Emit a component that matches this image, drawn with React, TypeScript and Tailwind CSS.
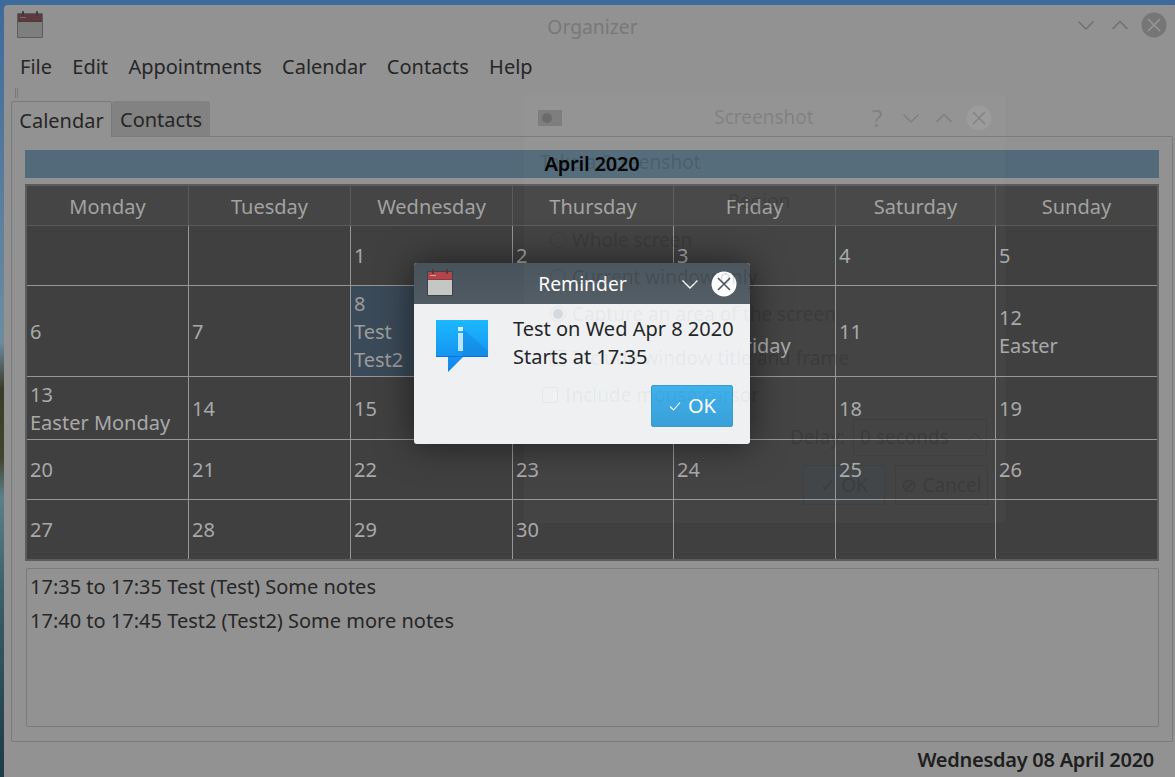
import type { ReactNode } from "react";

const days = ["Monday", "Tuesday", "Wednesday", "Thursday", "Friday", "Saturday", "Sunday"];

const weeks: string[][][] = [
  [[], [], ["1"], ["2"], ["3"], ["4"], ["5"]],
  [["6"], ["7"], ["8", "Test", "Test2"], ["9"], ["10", "Good Friday"], ["11"], ["12", "Easter"]],
  [["13", "Easter Monday"], ["14"], ["15"], ["16"], ["17"], ["18"], ["19"]],
  [["20"], ["21"], ["22"], ["23"], ["24"], ["25"], ["26"]],
  [["27"], ["28"], ["29"], ["30"], [], [], []],
];

function CalendarIcon({ dim }: { dim?: boolean }) {
  return (
    <svg width="28" height="28" viewBox="0 0 28 28" className="shrink-0">
      <rect x="1" y="2" width="26" height="25" rx="1" fill={dim ? "#5c5c5c" : "#3c4249"} />
      <rect x="2" y="3" width="24" height="23" fill={dim ? "#7d7f7d" : "#c4c7c4"} />
      <rect x="2" y="3" width="24" height="7" fill={dim ? "#5d3a40" : "#b3444a"} />
      <rect x="2" y="10" width="24" height="1" fill={dim ? "#4a3a3c" : "#8c3b40"} />
      <rect x="6" y="0" width="2" height="5" rx="1" fill={dim ? "#3f3a3c" : "#5c3236"} />
      <rect x="20" y="0" width="2" height="5" rx="1" fill={dim ? "#3f3a3c" : "#5c3236"} />
      <rect x="4" y="6" width="6" height="1" fill={dim ? "#7a6a6c" : "#d9a0a0"} />
    </svg>
  );
}

function Chevron({ up, color, width = 1.4 }: { up?: boolean; color: string; width?: number }) {
  return (
    <svg width="18" height="12" viewBox="0 0 18 12" fill="none" stroke={color} strokeWidth={width} className="shrink-0">
      <path d={up ? "M1.5 10 9 2.5 16.5 10" : "M1.5 2.5 9 10 16.5 2.5"} />
    </svg>
  );
}

function CloseCircle({ bg, color }: { bg: string; color: string }) {
  return (
    <svg width="26" height="26" viewBox="0 0 26 26" fill="none" className="shrink-0">
      <circle cx="13" cy="13" r="12.5" fill={bg} />
      <path d="M7 7 19 19M19 7 7 19" stroke={color} strokeWidth="1.6" />
    </svg>
  );
}

function Cell({ lines, active, last, bottom, nudge }: { lines: string[]; active?: boolean; last?: boolean; bottom?: boolean; nudge?: boolean }) {
  return (
    <div
      className={`flex flex-col justify-center pl-[3px] leading-[28px] border-[#969696] ${last ? "" : "border-r"} ${bottom ? "" : "border-b"} ${nudge ? "pt-[2px]" : ""} ${active ? "bg-[#3b4a58] text-[#9c9c9c]" : "text-[#a9a9a9]"}`}
    >
      {lines.map((line) => (
        <span key={line} className="whitespace-nowrap">
          {line}
        </span>
      ))}
    </div>
  );
}

function Radio({ on, tone }: { on?: boolean; tone: string }) {
  return (
    <span className={`flex h-[16px] w-[16px] shrink-0 items-center justify-center rounded-full border ${tone}`}>
      {on && <span className="h-[10px] w-[10px] rounded-full bg-[#5d8aa0]/20" />}
    </span>
  );
}

function GhostRow({ children, className }: { children: ReactNode; className: string }) {
  return <div className={`flex h-[28px] items-center whitespace-nowrap ${className}`}>{children}</div>;
}

// the half faded Screenshot window showing through everything else
function GhostWindow({ light }: { light?: boolean }) {
  const text = light ? "text-black/[0.05]" : "text-black/[0.15]";
  const line = light ? "border-black/[0.04]" : "border-black/[0.07]";
  const mark = light ? "#0000000d" : "#00000026";
  return (
    <div className={`flex h-[428px] w-[481px] flex-col rounded-[4px] text-[19px] ${light ? "" : "bg-white/[0.025]"} ${text}`}>
      <div className="flex h-[45px] shrink-0 items-center pl-[14px] pr-[13px]">
        <svg width="24" height="16" viewBox="0 0 24 16" className="shrink-0">
          <rect width="24" height="16" fill={mark} />
          <circle cx="9" cy="8" r="5" fill={mark} />
        </svg>
        <span className="ml-[152px] w-[100px] shrink-0 text-center">Screenshot</span>
        <span className="ml-[58px] mr-[20px] w-[10px] shrink-0 text-[24px]">?</span>
        <Chevron color={mark} />
        <span className="ml-[15px] mr-[13px]">
          <Chevron up color={mark} />
        </span>
        <CloseCircle bg={light ? "#00000000" : "#ffffff14"} color={mark} />
      </div>
      <div className="flex flex-1 flex-col">
        <GhostRow className="mt-[8px] pl-[16px]">Take a Screenshot</GhostRow>
        <GhostRow className="mt-[11px] pl-[204px]">Region</GhostRow>
        <div className="mt-[11px] flex flex-col gap-[9px] pl-[26px]">
          <GhostRow className="gap-[6px]">
            <Radio tone={line} /> Whole screen
          </GhostRow>
          <GhostRow className="gap-[6px]">
            <Radio tone={line} /> Current window only
          </GhostRow>
          <GhostRow className="gap-[6px]">
            <Radio on tone={line} /> Capture an area of the screen
          </GhostRow>
        </div>
        <GhostRow className="mt-[16px] gap-[6px] pl-[26px]">
          <span className={`h-[16px] w-[16px] shrink-0 rounded-[2px] border ${line}`} /> Include window title and frame
        </GhostRow>
        <GhostRow className="mt-[9px] gap-[7px] pl-[18px]">
          <span className={`h-[16px] w-[16px] shrink-0 rounded-[2px] border ${line}`} /> Include mouse cursor
        </GhostRow>
        <div className="mt-[9px] flex h-[38px] items-center pl-[266px]">
          <span className="w-[63px] shrink-0">Delay:</span>
          <span className={`flex h-[37px] w-[134px] shrink-0 items-center justify-between border ${line} pl-[6px] pr-[2px]`}>
            0 seconds
            <Chevron up color={mark} width={1} />
          </span>
        </div>
        <div className="mt-[9px] flex justify-end gap-[10px] pr-[17px]">
          <span className={`flex h-[40px] w-[82px] items-center justify-center border ${line} bg-[#3daee9]/[0.03]`}>✓ OK</span>
          <span className={`flex h-[40px] w-[93px] items-center justify-center border ${line}`}>⊘ Cancel</span>
        </div>
      </div>
    </div>
  );
}

export default function App() {
  return (
    <div
      className="relative h-[777px] w-[1175px] overflow-hidden bg-[linear-gradient(180deg,#3d6a9c_0%,#6d8c9e_44%,#3c3b2a_50%,#40452f_59%,#5d8088_64%,#3d5f68_76%,#1f3a44_100%)] pl-[4px] pt-[5px] text-[20px] text-[#262626]"
      style={{ fontFamily: '"Noto Sans", sans-serif' }}
    >
      <div className="flex h-[772px] w-[1171px] flex-col rounded-tl-[4px] bg-[#929292]">
        {/* title bar */}
        <div className="flex h-[42px] shrink-0 items-center pb-[2px] pl-[12px] pr-[8px]">
          <CalendarIcon dim />
          <div className="flex-1 pl-[64px] pt-[4px] text-center text-[19.3px] text-[#787878]">Organizer</div>
          <div className="flex items-center gap-[16px]">
            <Chevron color="#6f6f6f" />
            <span className="flex items-center gap-[12px]">
              <Chevron up color="#6f6f6f" />
              <CloseCircle bg="#767676" color="#969696" />
            </span>
          </div>
        </div>

        {/* menu bar */}
        <div className="flex h-[40px] shrink-0 items-center gap-[20.3px] pl-[16px]">
          <span>File</span>
          <span>Edit</span>
          <span>Appointments</span>
          <span>Calendar</span>
          <span>Contacts</span>
          <span>Help</span>
        </div>

        {/* tabs */}
        <div className="relative flex h-[49px] shrink-0 items-end pl-[7px]">
          <span className="absolute left-[11px] top-[1px] h-[10px] w-[3px] border-x border-[#7a7a7a]" />
          <div className="relative z-10 -mb-px flex h-[36px] w-[101px] items-center justify-center rounded-t-[3px] border border-b-0 border-[#7a7a7a] bg-[#929292] pt-[2px]">
            Calendar
          </div>
          <div className="flex h-[35px] w-[98px] items-center justify-center rounded-t-[3px] bg-[#828282] pt-[2px]">Contacts</div>
        </div>

        {/* tab page */}
        <div className="ml-[7px] mr-[2px] flex h-[606px] shrink-0 flex-col rounded-[2px] border border-[#7a7a7a] px-[13px] pt-[13px]">
          <div className="flex h-[28px] shrink-0 items-center justify-center bg-[#526a79] font-semibold tracking-[-0.2px] text-black">April 2020</div>

          <div className="mt-[6px] grid h-[377px] shrink-0 grid-cols-[162px_162px_162px_161px_162px_160px_1fr] grid-rows-[40px_60px_91px_63px_60px_1fr] border-2 border-[#5c5c5c] bg-[#404040]">
            {days.map((day, i) => (
              <div
                key={day}
                className={`flex items-center justify-center border-b border-[#5a5a5a] bg-[#454545] pt-[2px] text-[#a2a2a2] ${i < 6 ? "border-r" : ""}`}
              >
                {day}
              </div>
            ))}
            {weeks.map((week, w) =>
              week.map((lines, d) => (
                <Cell
                  key={`${w}-${d}`}
                  lines={lines}
                  active={lines[0] === "8"}
                  last={d === 6}
                  bottom={w === 4}
                  nudge={w === 1 || w === 2}
                />
              )),
            )}
          </div>

          <div className="ml-[1px] mt-[7px] flex h-[159px] shrink-0 flex-col gap-[6px] rounded-[2px] border border-[#7a7a7a] pl-[3px] pt-[4px] leading-[28px]">
            <div>17:35 to 17:35 Test (Test) Some notes</div>
            <div>17:40 to 17:45 Test2 (Test2) Some more notes</div>
          </div>
        </div>

        {/* status bar */}
        <div className="flex flex-1 items-center justify-end pr-[21px] font-semibold tracking-[-0.26px] text-[#1e1e1e]">Wednesday 08 April 2020</div>
      </div>

      <div className="pointer-events-none absolute left-[524px] top-[95px]">
        <GhostWindow />
      </div>

      {/* drop shadow, kept apart so the dialog can clip the ghost */}
      <div className="pointer-events-none absolute left-[414px] top-[263px] h-[181px] w-[336px] rounded-[3px] shadow-[0_0_36px_rgba(0,0,0,0.55)]" />

      {/* reminder dialog */}
      <div className="absolute left-[414px] top-[263px] flex h-[181px] w-[336px] flex-col overflow-hidden rounded-[3px] bg-[#eff0f1]">
        <div className="relative flex h-[41px] shrink-0 items-center overflow-hidden bg-[linear-gradient(180deg,#47525b,#505b64)] pl-[12px] text-white">
          <span className="-mt-[1px]">
            <CalendarIcon />
          </span>
          <div className="ml-[73px] w-[111px] shrink-0 pt-[1px] text-center text-[19.3px]">Reminder</div>
          <span className="ml-[43px] mr-[12px]">
            <Chevron color="#ffffff" />
          </span>
          <CloseCircle bg="#ffffff" color="#4a555e" />
          <div className="pointer-events-none absolute left-[110px] top-[-168px]">
            <GhostWindow />
          </div>
        </div>
        <div className="relative flex flex-1 flex-col overflow-hidden pl-[22px] pr-[17px] pt-[11px] text-[#232629]">
          <div className="flex">
            <svg width="52" height="52" viewBox="0 0 52 52" className="mt-[5px] shrink-0">
              <defs>
                <linearGradient id="info" x1="0" y1="0" x2="0" y2="1">
                  <stop offset="0" stopColor="#1cb9ff" />
                  <stop offset="1" stopColor="#1284ea" />
                </linearGradient>
              </defs>
              <path d="M0 0H52V37H27L12 52V37H0Z" fill="url(#info)" />
              <path d="M27 9 52 31V36H27Z" fill="#0d6cc4" opacity="0.25" />
              <rect x="0" y="36" width="52" height="1" fill="#0f6fd8" />
              <rect x="22" y="7" width="5" height="4" fill="#d6f0ff" />
              <rect x="22" y="13" width="5" height="18" fill="#b9e3ff" />
            </svg>
            <div className="ml-[25px] whitespace-nowrap leading-[28px]">
              <div>Test on Wed Apr 8 2020</div>
              <div>Starts at 17:35</div>
            </div>
          </div>
          <div className="mt-[13px] flex justify-end">
            <div className="flex h-[42px] w-[82px] items-center justify-center gap-[6px] rounded-[2px] border border-[#3a9bd0] bg-[linear-gradient(180deg,#3fb1ec,#3a9fd7)] text-white">
              <svg width="14" height="12" viewBox="0 0 14 12" fill="none" stroke="#ffffff" strokeWidth="1.1">
                <path d="M2 6.5 5.5 10 12 2.5" />
              </svg>
              OK
            </div>
          </div>
          <div className="pointer-events-none absolute left-[110px] top-[-209px]">
            <GhostWindow light />
          </div>
        </div>
      </div>
    </div>
  );
}
